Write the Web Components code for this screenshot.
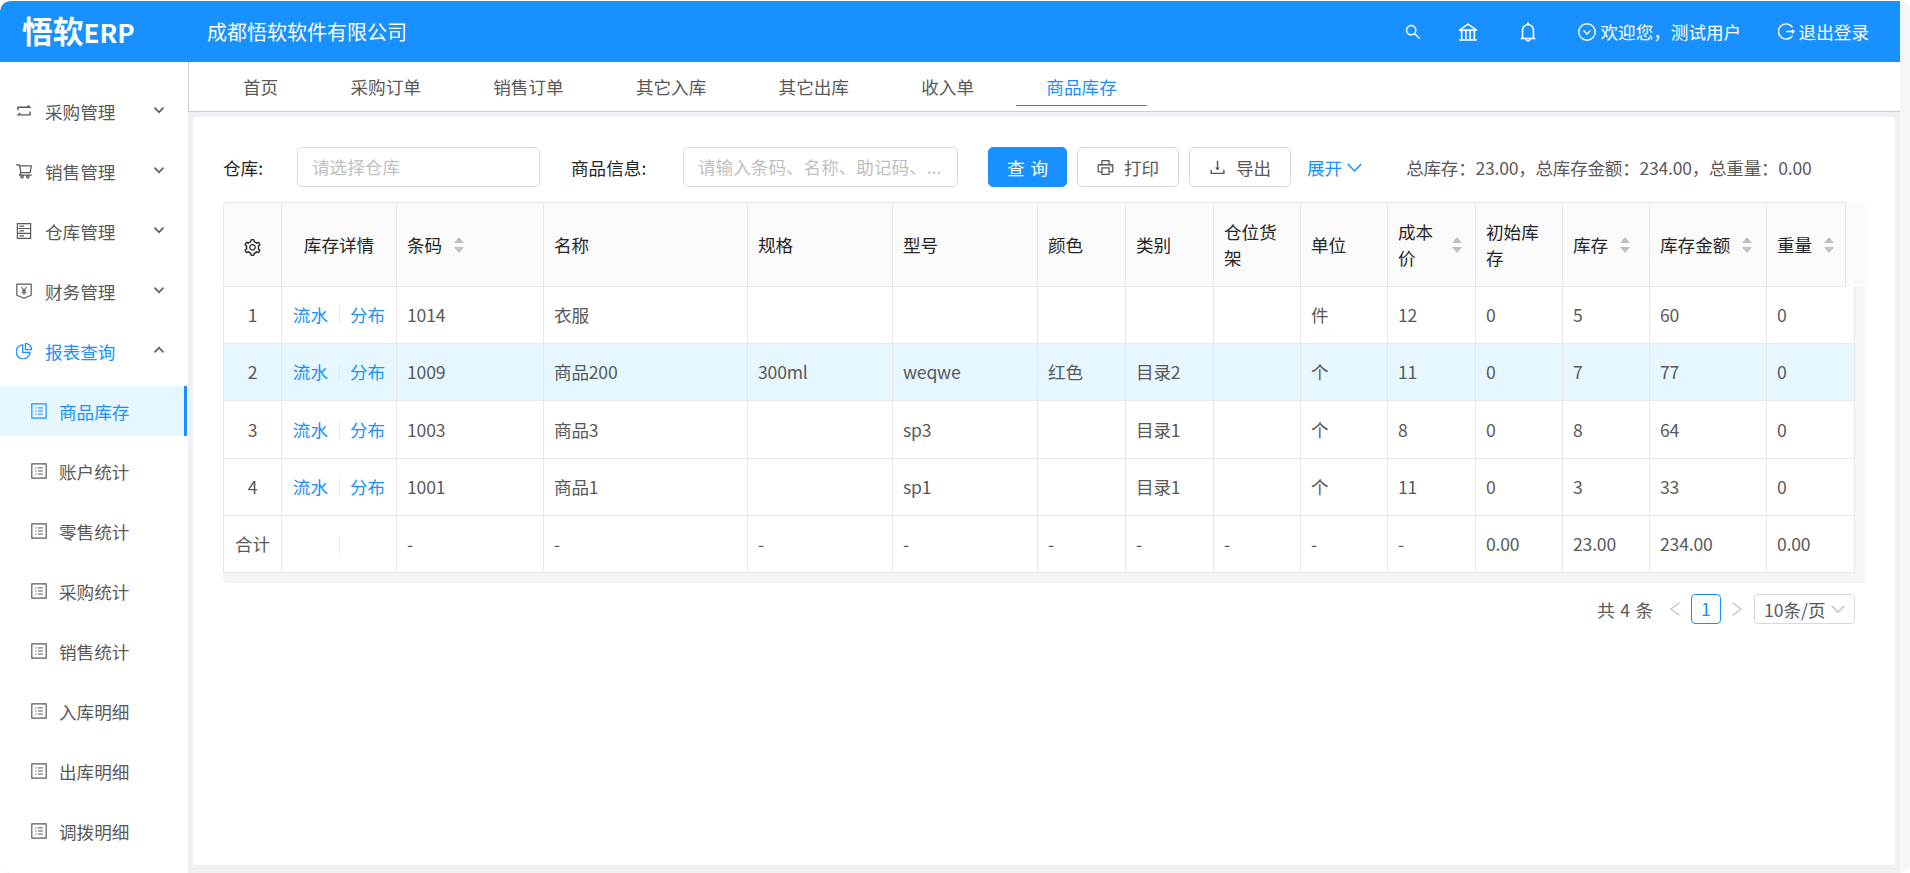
<!DOCTYPE html>
<html lang="zh-CN">
<head>
<meta charset="utf-8">
<title>悟软ERP</title>
<style>
  html, body { margin: 0; background: #fff; }
  body { font-family: "Noto Sans CJK SC", "Noto Sans", sans-serif; font-size: 17.6px; }
</style>
</head>
<body>
<erp-app>
  <erp-header slot="header"></erp-header>
  <erp-sidebar slot="side">
    <menu-item icon="retweet" arrow="chevdown">采购管理</menu-item>
    <menu-item icon="cart" arrow="chevdown">销售管理</menu-item>
    <menu-item icon="storage" arrow="chevdown">仓库管理</menu-item>
    <menu-item icon="money" arrow="chevdown">财务管理</menu-item>
    <menu-item icon="pie" arrow="chevup" open>报表查询</menu-item>
    <menu-item icon="profile" sub active>商品库存</menu-item>
    <menu-item icon="profile" sub>账户统计</menu-item>
    <menu-item icon="profile" sub>零售统计</menu-item>
    <menu-item icon="profile" sub>采购统计</menu-item>
    <menu-item icon="profile" sub>销售统计</menu-item>
    <menu-item icon="profile" sub>入库明细</menu-item>
    <menu-item icon="profile" sub>出库明细</menu-item>
    <menu-item icon="profile" sub>调拨明细</menu-item>
  </erp-sidebar>
  <erp-tabs slot="tabs"></erp-tabs>
  <stock-page slot="main"></stock-page>
</erp-app>

<script>
// icon bodies, all drawn on a 1024 box (ant style viewBox 64 64 896 896)
const ICONS = {
  search: '<path fill="currentColor" d="M909.6 854.5L649.9 594.8C690.2 542.7 712 479 712 412c0-80.2-31.3-155.4-87.9-212.1-56.6-56.7-132-87.9-212.1-87.9s-155.5 31.3-212.1 87.9C143.2 256.5 112 331.8 112 412c0 80.1 31.3 155.5 87.9 212.1C256.5 680.8 331.8 712 412 712c67 0 130.6-21.8 182.7-62l259.7 259.6a8.2 8.2 0 0 0 11.6 0l43.6-43.5a8.2 8.2 0 0 0 0-11.6zM570.4 570.4C528 612.7 471.8 636 412 636s-116-23.3-158.4-65.6C211.3 528 188 471.8 188 412s23.3-116.1 65.6-158.4C296 211.3 352.2 188 412 188s116.1 23.2 158.4 65.6S636 352.2 636 412s-23.3 116.1-65.6 158.4z"/>',
  bank: '<path fill="currentColor" d="M894 462c30.9 0 43.8-39.7 18.7-58L530.8 126.2a31.81 31.81 0 0 0-37.6 0L111.3 404c-25.1 18.2-12.2 58 18.8 58H192v374h-72c-4.4 0-8 3.6-8 8v52c0 4.4 3.6 8 8 8h784c4.4 0 8-3.6 8-8v-52c0-4.4-3.6-8-8-8h-72V462h62zM512 196.7l271.1 197.2H240.9L512 196.7zM264 462h117v374H264V462zm189 0h117v374H453V462zm307 374H642V462h118v374z"/>',
  bell: '<path fill="currentColor" d="M816 768h-24V428c0-141.1-104.3-257.7-240-277.1V112c0-22.1-17.9-40-40-40s-40 17.9-40 40v38.9c-135.7 19.4-240 136-240 277.1v340h-24c-17.7 0-32 14.3-32 32v32c0 4.4 3.6 8 8 8h216c0 61.8 50.2 112 112 112s112-50.2 112-112h216c4.4 0 8-3.6 8-8v-32c0-17.7-14.3-32-32-32zM512 888c-26.5 0-48-21.5-48-48h96c0 26.5-21.5 48-48 48zM304 768V428c0-55.6 21.6-107.8 60.9-147.1S456.4 220 512 220c55.6 0 107.8 21.6 147.1 60.9S720 372.4 720 428v340H304z"/>',
  downcircle: '<circle cx="512" cy="512" r="410" fill="none" stroke="currentColor" stroke-width="70"/><path d="M340 430l172 190 172-190" fill="none" stroke="currentColor" stroke-width="70"/>',
  logout: '<path d="M830 300A400 400 0 1 0 830 724" fill="none" stroke="currentColor" stroke-width="76"/><path d="M500 512h420M800 420l120 92-120 92" fill="none" stroke="currentColor" stroke-width="66"/>',
  retweet: '<path d="M170 470V300h650M720 190l110 110-110 0M854 540v190H200M300 620L190 730h110" fill="none" stroke="currentColor" stroke-width="78"/>',
  cart: '<path fill="currentColor" d="M922.9 701.9H327.4l29.9-60.9 496.8-.9c16.8 0 31.2-12 34.2-28.6l68.8-385.1c1.8-10.1-.9-20.5-7.5-28.4a34.99 34.99 0 0 0-26.6-12.5l-632-2.1-5.4-25.4c-3.4-16.2-18-28-34.6-28H96.5a35.3 35.3 0 1 0 0 70.6h125.9L246 312.8l58.1 281.3-74.8 122.1a34.96 34.96 0 0 0-3 36.8c6 11.9 18.1 19.4 31.5 19.4h62.8a102.43 102.43 0 0 0-20.6 61.7c0 56.6 46 102.6 102.6 102.6s102.6-46 102.6-102.6c0-22.3-7.4-44-20.6-61.7h161.1a102.43 102.43 0 0 0-20.6 61.7c0 56.6 46 102.6 102.6 102.6s102.6-46 102.6-102.6c0-22.3-7.4-44-20.6-61.7H923c19.4 0 35.3-15.8 35.3-35.3a35.42 35.42 0 0 0-35.4-35.2zM305.7 253l575.8 1.9-56.4 315.8-452.3.8L305.7 253zm96.9 612.7c-17.4 0-31.6-14.2-31.6-31.6 0-17.4 14.2-31.6 31.6-31.6s31.6 14.2 31.6 31.6a31.6 31.6 0 0 1-31.6 31.6zm325.1 0c-17.4 0-31.6-14.2-31.6-31.6 0-17.4 14.2-31.6 31.6-31.6s31.6 14.2 31.6 31.6a31.6 31.6 0 0 1-31.6 31.6z"/>',
  storage: '<path d="M140 100h744v824H140zM140 370h744M140 640h744M260 240h250M260 505h250M260 780h250" fill="none" stroke="currentColor" stroke-width="66"/>',
  money: '<path d="M110 130h804v620L512 920 110 750z" fill="none" stroke="currentColor" stroke-width="66" stroke-linejoin="round"/><path d="M370 290l142 200 142-200M512 490v240M380 510h264M380 610h264" fill="none" stroke="currentColor" stroke-width="58"/>',
  pie: '<path d="M440 170A390 390 0 1 0 850 590H440z" fill="none" stroke="currentColor" stroke-width="72"/><path d="M590 90a340 340 0 0 1 340 340H590z" fill="none" stroke="currentColor" stroke-width="72"/>',
  profile: '<path d="M110 110h804v804H110z" fill="none" stroke="currentColor" stroke-width="66"/><path d="M300 340h70M450 340h280M300 512h70M450 512h280M300 684h70M450 684h280" fill="none" stroke="currentColor" stroke-width="56"/>',
  setting: '<path fill="currentColor" d="M924.8 625.7l-65.5-56c3.1-19 4.7-38.4 4.7-57.8s-1.6-38.8-4.7-57.8l65.5-56a32.03 32.03 0 0 0 9.3-35.2l-.9-2.6a443.74 443.74 0 0 0-79.7-137.9l-1.8-2.1a32.12 32.12 0 0 0-35.1-9.5l-81.3 28.9c-30-24.6-63.5-44-99.7-57.6l-15.7-85a32.05 32.05 0 0 0-25.8-25.7l-2.7-.5c-52.1-9.4-106.9-9.4-159 0l-2.7.5a32.05 32.05 0 0 0-25.8 25.7l-15.8 85.4a351.86 351.86 0 0 0-99 57.4l-81.9-29.1a32 32 0 0 0-35.1 9.5l-1.8 2.1a446.02 446.02 0 0 0-79.7 137.9l-.9 2.6c-4.5 12.5-.8 26.5 9.3 35.2l66.3 56.6c-3.1 18.8-4.6 38-4.6 57.1 0 19.2 1.5 38.4 4.6 57.1L99 625.5a32.03 32.03 0 0 0-9.3 35.2l.9 2.6c18.1 50.4 44.9 96.9 79.7 137.9l1.8 2.1a32.12 32.12 0 0 0 35.1 9.5l81.9-29.1c29.8 24.5 63.1 43.9 99 57.4l15.8 85.4a32.05 32.05 0 0 0 25.8 25.7l2.7.5a449.4 449.4 0 0 0 159 0l2.7-.5a32.05 32.05 0 0 0 25.8-25.7l15.7-85a350 350 0 0 0 99.7-57.6l81.3 28.9a32 32 0 0 0 35.1-9.5l1.8-2.1c34.8-41.1 61.6-87.5 79.7-137.9l.9-2.6c4.5-12.3.8-26.3-9.3-35zM788.3 465.9c2.5 15.1 3.8 30.6 3.8 46.1s-1.3 31-3.8 46.1l-6.6 40.1 74.7 63.9a370.03 370.03 0 0 1-42.6 73.6L721 702.8l-31.4 25.8c-23.9 19.6-50.5 35-79.3 45.8l-38.1 14.3-17.9 97a377.5 377.5 0 0 1-85 0l-17.9-97.2-37.8-14.5c-28.5-10.8-55-26.2-78.7-45.7l-31.4-25.9-93.4 33.2c-17-22.9-31.2-47.6-42.6-73.6l75.5-64.5-6.5-40c-2.4-14.9-3.7-30.3-3.7-45.5 0-15.3 1.2-30.6 3.7-45.5l6.5-40-75.5-64.5c11.3-26.1 25.6-50.7 42.6-73.6l93.4 33.2 31.4-25.9c23.7-19.5 50.2-34.9 78.7-45.7l37.9-14.3 17.9-97.2c28.1-3.2 56.8-3.2 85 0l17.9 97 38.1 14.3c28.7 10.8 55.4 26.2 79.3 45.8l31.4 25.8 92.8-32.9c17 22.9 31.2 47.6 42.6 73.6L781.8 426l6.5 39.9zM512 326c-97.2 0-176 78.8-176 176s78.8 176 176 176 176-78.8 176-176-78.8-176-176-176zm79.2 255.2A111.6 111.6 0 0 1 512 614c-29.9 0-58-11.7-79.2-32.8A111.6 111.6 0 0 1 400 502c0-29.9 11.7-58 32.8-79.2C454 401.6 482.1 390 512 390c29.9 0 58 11.6 79.2 32.8A111.6 111.6 0 0 1 624 502c0 29.9-11.7 58-32.8 79.2z"/>',
  printer: '<path fill="currentColor" d="M820 436h-40c-4.4 0-8 3.6-8 8v40c0 4.4 3.6 8 8 8h40c4.4 0 8-3.6 8-8v-40c0-4.4-3.6-8-8-8zm32-104H732V120c0-4.4-3.6-8-8-8H300c-4.4 0-8 3.6-8 8v212H172c-44.2 0-80 35.8-80 80v328c0 17.7 14.3 32 32 32h168v132c0 4.4 3.6 8 8 8h424c4.4 0 8-3.6 8-8V772h168c17.7 0 32-14.3 32-32V412c0-44.2-35.8-80-80-80zM360 180h304v152H360V180zm304 664H360V568h304v276zm200-140H732V500H292v204H160V412c0-6.6 5.4-12 12-12h680c6.6 0 12 5.4 12 12v292z"/>',
  download: '<path fill="currentColor" d="M505.7 661a8 8 0 0 0 12.6 0l112-141.7c4.1-5.2.4-12.9-6.3-12.9h-74.1V168c0-4.4-3.6-8-8-8h-60c-4.4 0-8 3.6-8 8v338.3H400c-6.7 0-10.4 7.7-6.3 12.9l112 141.8zM878 626h-60c-4.4 0-8 3.6-8 8v154H214V634c0-4.4-3.6-8-8-8h-60c-4.4 0-8 3.6-8 8v188c0 17.7 14.3 32 32 32h684c17.7 0 32-14.3 32-32V634c0-4.4-3.6-8-8-8z"/>',
  down: '<path d="M110 300l402 420 402-420" fill="none" stroke="currentColor" stroke-width="90"/>',
  chevdown: '<path d="M110 300l402 420 402-420" fill="none" stroke="currentColor" stroke-width="150"/>',
  chevup: '<path d="M110 720l402-420 402 420" fill="none" stroke="currentColor" stroke-width="150"/>',
  left: '<path d="M800 110L240 512l560 402" fill="none" stroke="currentColor" stroke-width="70"/>',
  right: '<path d="M224 110l560 402-560 402" fill="none" stroke="currentColor" stroke-width="70"/>'
};

class ErpIcon extends HTMLElement {
  connectedCallback() {
    const size = this.getAttribute("size") || 16;
    const name = this.getAttribute("name");
    this.attachShadow({ mode: "open" }).innerHTML = `
      <style>:host { display: inline-flex; flex: none; width: ${size}px; height: ${size}px; } svg { width: 100%; height: 100%; display: block; }</style>
      <svg viewBox="64 64 896 896" aria-hidden="true">${ICONS[name] || ""}</svg>`;
  }
}
customElements.define("erp-icon", ErpIcon);

class ErpApp extends HTMLElement {
  constructor() {
    super();
    this.attachShadow({ mode: "open" }).innerHTML = `
      <style>
        :host { display: block; width: 1910px; height: 872px; margin-top: 1px; background: #f4f5f7; border-radius: 10px; overflow: hidden; }
        .shell { width: 1900px; height: 872px; display: grid; grid-template-columns: 188px 1fr; grid-template-rows: 61px 1fr; background: #eef0f4; border-radius: 10px 0 0 10px; overflow: hidden; }
        .top { grid-column: 1 / 3; }
        .right { display: flex; flex-direction: column; min-width: 0; }
      </style>
      <div class="shell">
        <div class="top"><slot name="header"></slot></div>
        <slot name="side"></slot>
        <div class="right">
          <slot name="tabs"></slot>
          <slot name="main"></slot>
        </div>
      </div>`;
  }
}
customElements.define("erp-app", ErpApp);

class ErpHeader extends HTMLElement {
  constructor() {
    super();
    this.attachShadow({ mode: "open" }).innerHTML = `
      <style>
        :host { display: flex; align-items: center; height: 61px; background: #1890ff; color: #fff; padding: 0 31px 0 22px; box-sizing: border-box; }
        .logo { font-size: 30.8px; font-weight: 700; width: 185px; line-height: 61px; margin-top: -2px; flex: none; white-space: nowrap; }
        .logo span { font-size: 26px; }
        .company { font-size: 20px; white-space: nowrap; }
        .tools { margin-left: auto; display: flex; align-items: center; font-size: 17.6px; white-space: nowrap; }
        .user { display: flex; align-items: center; gap: 4px; }
        .search { margin-right: 37px; }
        .bank { margin-right: 40px; }
        .bell { margin-right: 40.6px; }
        .user.first { margin-right: 36.4px; }
      </style>
      <div class="logo">悟软<span>ERP</span></div>
      <div class="company">成都悟软软件有限公司</div>
      <div class="tools">
        <erp-icon class="search" name="search" size="16"></erp-icon>
        <erp-icon class="bank" name="bank" size="20"></erp-icon>
        <erp-icon class="bell" name="bell" size="20"></erp-icon>
        <span class="user first"><erp-icon name="downcircle" size="18"></erp-icon>欢迎您，测试用户</span>
        <span class="user"><erp-icon name="logout" size="17"></erp-icon>退出登录</span>
      </div>`;
  }
}
customElements.define("erp-header", ErpHeader);

class ErpSidebar extends HTMLElement {
  constructor() {
    super();
    this.attachShadow({ mode: "open" }).innerHTML = `
      <style>
        :host { display: flex; flex-direction: column; gap: 10px; background: #fff; padding-top: 24px; box-sizing: border-box; overflow: hidden; border-radius: 0 0 0 10px; }
      </style>
      <slot></slot>`;
  }
}
customElements.define("erp-sidebar", ErpSidebar);

class MenuItem extends HTMLElement {
  connectedCallback() {
    const arrow = this.getAttribute("arrow");
    this.attachShadow({ mode: "open" }).innerHTML = `
      <style>
        :host { display: flex; align-items: center; flex: none; height: 50px; color: #595959; font-size: 17.6px; padding-left: 16px; gap: 13px; box-sizing: border-box; white-space: nowrap; }
        :host([sub]) { padding-left: 31px; gap: 12px; }
        :host([open]) { color: #1890ff; }
        :host([active]) { color: #1890ff; background: #e6f7ff; border-right: 3px solid #1890ff; margin-right: 1px; }
        .arrow { margin-left: auto; margin-right: 24px; color: #595959; margin-top: -2px; }
      </style>
      <erp-icon name="${this.getAttribute("icon")}" size="16"></erp-icon>
      <slot></slot>
      ${arrow ? `<erp-icon class="arrow" name="${arrow}" size="10"></erp-icon>` : ""}`;
  }
}
customElements.define("menu-item", MenuItem);

class ErpTabs extends HTMLElement {
  constructor() {
    super();
    const tabs = ["首页", "采购订单", "销售订单", "其它入库", "其它出库", "收入单", "商品库存"];
    this.attachShadow({ mode: "open" }).innerHTML = `
      <style>
        :host { display: flex; gap: 12.3px; flex: none; height: 50px; padding-left: 24px; background: #fff; border-left: 1px solid #ccc; border-bottom: 1px solid #ccc; box-sizing: border-box; }
        .tab { padding: 0 30px; height: 43px; line-height: 50px; color: #595959; white-space: nowrap; }
        .tab.on { color: #1890ff; border-bottom: 1px solid #1890ff; }
      </style>
      ${tabs.map((t, i) => `<div class="tab${i === tabs.length - 1 ? " on" : ""}">${t}</div>`).join("")}`;
  }
}
customElements.define("erp-tabs", ErpTabs);

class StockPage extends HTMLElement {
  constructor() {
    super();
    this.attachShadow({ mode: "open" }).innerHTML = `
      <style>
        :host { display: block; flex: 1; margin: 5px 5px 8px 5px; background: #fff; border-radius: 3px; padding: 30px 0 0 30px; min-height: 0; }
      </style>
      <stock-toolbar></stock-toolbar>
      <stock-table></stock-table>
      <stock-pager></stock-pager>`;
  }
}
customElements.define("stock-page", StockPage);

class StockToolbar extends HTMLElement {
  constructor() {
    super();
    this.attachShadow({ mode: "open" }).innerHTML = `
      <style>
        :host { display: flex; align-items: center; height: 40px; white-space: nowrap; font-size: 17.6px; }
        .label { color: #262626; flex: none; }
        .l1 { width: 74px; }
        .l2 { width: 112px; margin-left: 31px; }
        .input { height: 40px; box-sizing: border-box; border: 1px solid #d9d9d9; border-radius: 5px; padding-left: 14px; color: #bfbfbf; line-height: 38px; flex: none; overflow: hidden; }
        .i1 { width: 243px; }
        .i2 { width: 275px; }
        .btn { height: 40px; box-sizing: border-box; border: 1px solid #d9d9d9; border-radius: 5px; color: #595959; display: flex; align-items: center; justify-content: center; gap: 10px; flex: none; width: 102px; margin-left: 10px; }
        .primary { background: #1890ff; border-color: #1890ff; color: #fff; width: 79px; margin-left: 30px; word-spacing: 2px; }
        .expand { color: #1890ff; margin-left: 16px; display: flex; align-items: center; gap: 5px; }
        .total { color: #595959; margin-left: 44px; letter-spacing: -.26px; }
      </style>
      <span class="label l1">仓库:</span>
      <div class="input i1">请选择仓库</div>
      <span class="label l2">商品信息:</span>
      <div class="input i2">请输入条码、名称、助记码、...</div>
      <div class="btn primary">查 询</div>
      <div class="btn"><erp-icon name="printer" size="17"></erp-icon>打印</div>
      <div class="btn"><erp-icon name="download" size="17"></erp-icon>导出</div>
      <div class="expand">展开<erp-icon name="down" size="15"></erp-icon></div>
      <div class="total">总库存：23.00，总库存金额：234.00，总重量：0.00</div>`;
  }
}
customElements.define("stock-toolbar", StockToolbar);

class StockTable extends HTMLElement {
  constructor() {
    super();
    // column edges read off the reference
    const edges = [223, 282, 397, 544, 748, 893, 1038, 1126, 1214, 1301, 1388, 1476, 1563, 1650, 1767];
    const widths = edges.slice(1).map((x, i) => x - edges[i]);
    const heads = [
      ["#"], ["库存详情"], ["条码", 1], ["名称"], ["规格"], ["型号"], ["颜色"], ["类别"], ["仓位货架"],
      ["单位"], ["成本价", 1], ["初始库存"], ["库存", 1], ["库存金额", 1], ["重量", 1]
    ];
    const rows = [
      ["1", "A", "1014", "衣服", "", "", "", "", "", "件", "12", "0", "5", "60", "0"],
      ["2", "A", "1009", "商品200", "300ml", "weqwe", "红色", "目录2", "", "个", "11", "0", "7", "77", "0"],
      ["3", "A", "1003", "商品3", "", "sp3", "", "目录1", "", "个", "8", "0", "8", "64", "0"],
      ["4", "A", "1001", "商品1", "", "sp1", "", "目录1", "", "个", "11", "0", "3", "33", "0"],
      ["合计", "B", "-", "-", "-", "-", "-", "-", "-", "-", "-", "0.00", "23.00", "234.00", "0.00"]
    ];
    const cols = (last) => `<colgroup>${widths.map((w) => `<col style="width:${w}px">`).join("")}<col style="width:${last}px"></colgroup>`;
    const sorter = `<svg class="sort" viewBox="0 0 10 16" width="10" height="16"><path d="M5 0l5 6H0zM5 16l5-6H0z" fill="#bfbfbf"/></svg>`;
    const head = heads.map(([t, s], i) => {
      if (i === 0) return `<th class="c"><erp-icon name="setting" size="17"></erp-icon></th>`;
      if (i === 1) return `<th class="c">${t}</th>`;
      return `<th><div class="th"><span>${t}</span>${s ? sorter : ""}</div></th>`;
    }).join("");
    const action = (on) => `<div class="act"><span>${on ? "流水" : ""}</span><i></i><span>${on ? "分布" : ""}</span></div>`;
    const body = rows.map((r, n) => `<tr class="${n === 1 ? "sel" : ""}">${r.map((v, i) => {
      if (i === 0) return `<td class="c">${v}</td>`;
      if (i === 1) return `<td>${action(v === "A")}</td>`;
      return `<td>${v}</td>`;
    }).join("")}</tr>`).join("");
    this.attachShadow({ mode: "open" }).innerHTML = `
      <style>
        :host { display: block; width: 1642px; margin-top: 15px; font-size: 17.6px; line-height: 1.5; }
        .headrow, .bodyrow { display: flex; }
        .headrow { background: #fafafa; }
        .headrow table { width: 1623px; }
        .bodyrow { background: #f5f5f5; }
        .bodyrow table { width: 1632px; }
        table { border-collapse: separate; border-spacing: 0; table-layout: fixed; flex: none; background: #fff; }
        th, td { box-sizing: border-box; border-right: 1px solid #e8e8e8; border-bottom: 1px solid #e8e8e8; padding: 1px 10px 0; text-align: left; overflow: hidden; }
        th:first-child, td:first-child { border-left: 1px solid #e8e8e8; }
        th { height: 85px; background: #fafafa; color: #262626; font-weight: 400; border-top: 1px solid #e8e8e8; padding-right: 13px; }
        th:last-child { padding-right: 5px; }
        th:first-child { border-top-left-radius: 4px; }
        th.c { padding: 1px 0 0; }
        td { color: #595959; height: 57px; letter-spacing: -.2px; }
        tr:nth-child(3) td { height: 58px; }
        tr.sel td { background: #e6f7ff; }
        .c { text-align: center; }
        th.c erp-icon { vertical-align: middle; color: #262626; }
        .th { display: flex; align-items: center; }
        .sort { flex: none; margin-left: 12px; }
        .act { display: flex; align-items: center; justify-content: center; color: #1890ff; letter-spacing: 0; }
        .act span { width: 35.2px; white-space: nowrap; }
        .act i { width: 1px; height: 17px; background: #e8e8e8; margin: 0 10.5px; }
        .track { height: 10px; background: #f5f5f5; border-radius: 0 0 0 4px; }
      </style>
      <div class="headrow"><table>${cols(79)}<tr>${head}</tr></table></div>
      <div class="bodyrow"><table>${cols(88)}${body}</table></div>
      <div class="track"></div>`;
  }
}
customElements.define("stock-table", StockTable);

class StockPager extends HTMLElement {
  constructor() {
    super();
    this.attachShadow({ mode: "open" }).innerHTML = `
      <style>
        :host { display: flex; align-items: center; justify-content: flex-end; width: 1632px; height: 30px; margin-top: 11px; color: #595959; font-size: 17.6px; white-space: nowrap; }
        .total { margin-right: 15px; word-spacing: 1.5px; }
        .arrow { color: #bfbfbf; }
        .page { width: 30px; height: 30px; box-sizing: border-box; border: 1px solid #1890ff; border-radius: 4px; color: #1890ff; text-align: center; line-height: 28px; margin: 0 9px; }
        .size { width: 101px; height: 30px; box-sizing: border-box; border: 1px solid #d9d9d9; border-radius: 4px; margin-left: 10px; padding-left: 9px; display: flex; align-items: center; gap: 5px; }
        .size erp-icon { color: #bfbfbf; }
      </style>
      <span class="total">共 4 条</span>
      <erp-icon class="arrow" name="left" size="14"></erp-icon>
      <span class="page">1</span>
      <erp-icon class="arrow" name="right" size="14"></erp-icon>
      <div class="size">10条/页<erp-icon name="down" size="14"></erp-icon></div>`;
  }
}
customElements.define("stock-pager", StockPager);
</script>
</body>
</html>
